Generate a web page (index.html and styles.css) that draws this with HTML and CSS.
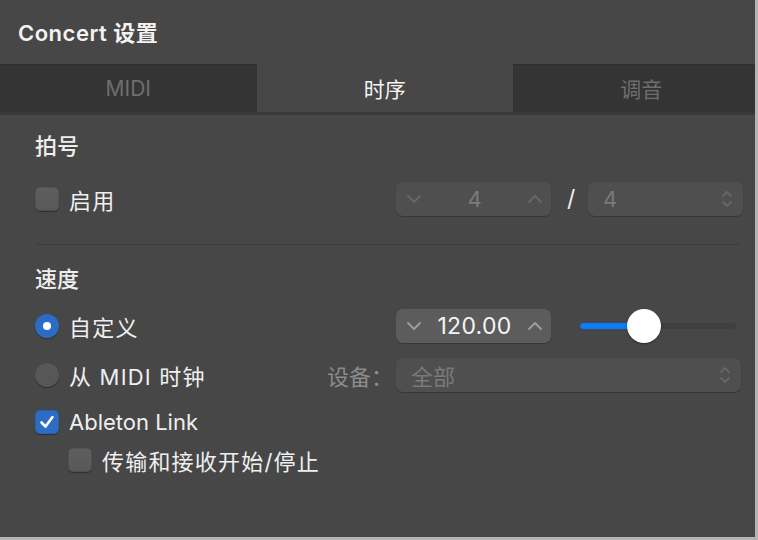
FILE: index.html
```html
<!DOCTYPE html>
<html lang="zh-CN">
<head>
<meta charset="utf-8">
<title>Concert 设置</title>
<link rel="stylesheet" href="styles.css">
</head>
<body>
<div class="panel">
  <header class="titlebar"><h1 class="title">Concert 设置</h1></header>
  <nav class="tabs">
    <div class="tab">MIDI</div>
    <div class="tab active">时序</div>
    <div class="tab">调音</div>
  </nav>
  <main class="content">
    <h2 class="section-title">拍号</h2>
    <div class="row row-enable">
      <div class="left">
        <span class="checkbox"></span><span class="label cjk">启用</span>
      </div>
      <div class="right">
        <div class="stepper disabled">
          <svg class="chev" viewBox="0 0 16 10"><path d="M2 2 L8 8 L14 2"/></svg>
          <span class="val">4</span>
          <svg class="chev" viewBox="0 0 16 10"><path d="M2 8 L8 2 L14 8"/></svg>
        </div>
        <span class="slash">/</span>
        <div class="popup disabled small">
          <span class="val">4</span>
          <svg class="updown" viewBox="0 0 12 18"><path d="M2 6 L6 2 L10 6 M2 12 L6 16 L10 12"/></svg>
        </div>
      </div>
    </div>
    <hr class="divider">
    <h2 class="section-title tempo-title">速度</h2>
    <div class="row row-custom">
      <div class="left">
        <span class="radio on"></span><span class="label cjk">自定义</span>
      </div>
      <div class="right">
        <div class="stepper active">
          <svg class="chev" viewBox="0 0 16 10"><path d="M2 2 L8 8 L14 2"/></svg>
          <span class="val">120.00</span>
          <svg class="chev" viewBox="0 0 16 10"><path d="M2 8 L8 2 L14 8"/></svg>
        </div>
        <div class="slider">
          <div class="track"><div class="fill" style="width:64px"></div></div>
          <div class="knob" style="left:47px"></div>
        </div>
      </div>
    </div>
    <div class="row row-midi">
      <div class="left">
        <span class="radio"></span><span class="label cjk">从 MIDI 时钟</span>
        <span class="device-label">设备：</span>
      </div>
      <div class="right">
        <div class="popup disabled wide">
          <span class="val">全部</span>
          <svg class="updown" viewBox="0 0 12 18"><path d="M2 6 L6 2 L10 6 M2 12 L6 16 L10 12"/></svg>
        </div>
      </div>
    </div>
    <div class="row row-link">
      <div class="left">
        <span class="checkbox on"><svg viewBox="0 0 20 20"><path d="M4.5 10.5 L8.5 14.5 L15.5 5"/></svg></span><span class="label">Ableton Link</span>
      </div>
    </div>
    <div class="row row-transport">
      <div class="left indent">
        <span class="checkbox"></span><span class="label cjk">传输和接收开始/停止</span>
      </div>
    </div>
  </main>
</div>
</body>
</html>
```

FILE: styles.css
```css
* { box-sizing: border-box; }
html, body { margin: 0; padding: 0; }
body {
  background: #b4b4b4;
  width: 758px;
  height: 540px;
  overflow: hidden;
  font-family: Inter, "Noto Sans CJK SC", sans-serif;
  color: #ececec;
}
.panel {
  width: 755px;
  height: 537px;
  background: #474747;
  overflow: hidden;
  display: flex;
  flex-direction: column;
}
.titlebar {
  height: 64px;
  display: flex;
  align-items: center;
  padding-left: 18px;
  padding-bottom: 2px;
}
.title {
  margin: 0;
  font-size: 22px;
  font-weight: 600;
  color: #f2f2f2;
  letter-spacing: 0.5px;
}
.tabs {
  display: flex;
  height: 51px;
  width: 769px;
  background: #353535;
  border-bottom: 3px solid #3a3a3a;
  flex: 0 0 auto;
}
.tab {
  flex: 0 0 256.5px;
  display: flex;
  align-items: center;
  justify-content: center;
  font-size: 21px;
  color: #6e6e6e;
  background: #343434;
  box-shadow: inset 0 1px 0 #2e2e2e;
}
.tab.active {
  background: #474747;
  color: #f4f4f4;
  box-shadow: none;
}
.content {
  padding: 9px 0 0 35px;
}
.section-title {
  margin: 0;
  height: 44px;
  line-height: 44px;
  font-size: 22px;
  font-weight: 500;
  color: #eeeeee;
}
.row {
  display: grid;
  grid-template-columns: 361px auto;
  align-items: center;
  height: 36px;
}
.left {
  display: flex;
  align-items: center;
  height: 36px;
}
.left.indent { padding-left: 33px; }
.right {
  display: flex;
  align-items: center;
}
.label {
  font-size: 22px;
  color: #efefef;
  margin-left: 10px;
  white-space: nowrap;
}
.label.cjk { letter-spacing: 1.2px; }
.row-enable { margin-top: 13px; }
.divider {
  margin: 27px 15px 0 1px;
  border: 0;
  height: 1px;
  background: #3e3e3e;
}
.tempo-title { margin-top: 12px; }
.row-custom { margin-top: 7px; }
.row-midi { margin-top: 13px; }
.row-link { margin-top: 11px; }
.row-transport { margin-top: 2px; }

.checkbox {
  width: 24px;
  height: 24px;
  border-radius: 5px;
  background: linear-gradient(#5e5e5e, #585858);
  box-shadow: 0 1px 1px rgba(0,0,0,0.35), inset 0 0 0 0.5px rgba(0,0,0,0.2);
  flex: 0 0 auto;
  display: flex;
  align-items: center;
  justify-content: center;
}
.checkbox.on {
  background: #2d6cc5;
}
.checkbox svg { width: 20px; height: 20px; }
.checkbox svg path {
  fill: none;
  stroke: #ffffff;
  stroke-width: 2.6;
  stroke-linecap: round;
  stroke-linejoin: round;
}
.radio {
  width: 24px;
  height: 24px;
  border-radius: 50%;
  background: #575757;
  box-shadow: 0 1px 1px rgba(0,0,0,0.35);
  flex: 0 0 auto;
  position: relative;
}
.radio.on { background: #2d6cc5; }
.radio.on::after {
  content: "";
  position: absolute;
  left: 8px;
  top: 8px;
  width: 8px;
  height: 8px;
  border-radius: 50%;
  background: #ffffff;
}
.device-label {
  margin-left: auto;
  margin-right: 3px;
  font-size: 22px;
  color: #8c8c8c;
  white-space: nowrap;
}
.stepper {
  width: 155px;
  height: 34px;
  border-radius: 7px;
  display: flex;
  align-items: center;
  justify-content: space-between;
  padding: 0 8px 0 10px;
  box-shadow: 0 1px 1px rgba(0,0,0,0.25);
}
.stepper.disabled { background: #4f4f4f; color: #7a7a7a; }
.stepper.active { background: #5c5c5c; color: #f4f4f4; }
.stepper .val { font-size: 22px; }
.stepper.active .val { font-size: 23px; letter-spacing: 0.3px; }
.chev { width: 16px; height: 10px; }
.chev path {
  fill: none;
  stroke-width: 2;
  stroke-linecap: round;
  stroke-linejoin: round;
}
.disabled .chev path { stroke: #676767; }
.active .chev path { stroke: #9c9c9c; }
.slash {
  margin: 0 15px 0 16px;
  font-size: 23px;
  color: #f0f0f0;
  width: 6px;
}
.popup {
  height: 34px;
  border-radius: 7px;
  display: flex;
  align-items: center;
  justify-content: space-between;
  padding: 0 10px 0 15px;
  box-shadow: 0 1px 1px rgba(0,0,0,0.25);
}
.popup.disabled { background: #4f4f4f; color: #7a7a7a; }
.popup.small { width: 155px; }
.popup.wide { width: 345px; }
.popup .val { font-size: 22px; }
.updown { width: 12px; height: 18px; }
.updown path {
  fill: none;
  stroke: #676767;
  stroke-width: 1.8;
  stroke-linecap: round;
  stroke-linejoin: round;
}
.slider {
  position: relative;
  margin-left: 29px;
  width: 156px;
  height: 34px;
  display: flex;
  align-items: center;
}
.track {
  width: 100%;
  height: 6px;
  border-radius: 3px;
  background: #3f3f3f;
  overflow: hidden;
}
.fill {
  height: 100%;
  background: #0a7dff;
  border-radius: 3px;
}
.knob {
  position: absolute;
  top: 0;
  width: 34px;
  height: 34px;
  border-radius: 50%;
  background: #ffffff;
  box-shadow: 0 1px 2px rgba(0,0,0,0.4);
}
```
